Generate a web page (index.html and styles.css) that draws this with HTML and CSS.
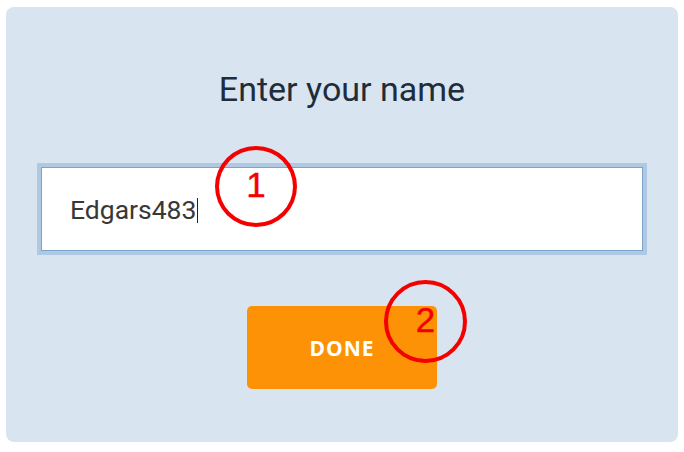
FILE: index.html
```html
<!DOCTYPE html>
<html>
<head>
<meta charset="utf-8">
<link rel="stylesheet" href="styles.css">
</head>
<body>
<div class="card">
  <h1 class="title">Enter your name</h1>
  <div class="field"><span class="value">Edgars483</span><span class="caret"></span></div>
  <button class="done">DONE</button>
  <div class="mark mark-1"><span>1</span></div>
  <div class="mark mark-2"><span>2</span></div>
</div>
</body>
</html>
```
FILE: styles.css
```css
html, body {
  margin: 0;
  padding: 0;
  background: #ffffff;
}
body {
  width: 684px;
  height: 452px;
  overflow: hidden;
}
.card {
  position: relative;
  box-sizing: border-box;
  margin: 7px 6px 0 6px;
  width: 672px;
  height: 435px;
  background: #d8e4ef;
  border-radius: 8px;
  padding: 62px 35px 0 35px;
  display: flex;
  flex-direction: column;
  align-items: center;
}
.title {
  margin: 0;
  font-family: Roboto, "Liberation Sans", sans-serif;
  font-weight: 400;
  font-size: 34px;
  line-height: 40px;
  color: #1e2c3b;
}
.field {
  margin-top: 58px;
  box-sizing: border-box;
  width: 602px;
  height: 84px;
  background: #fff;
  border: 1px solid #7ca3cb;
  box-shadow: 0 0 0 4px #afc9e3;
  display: flex;
  align-items: center;
  padding-left: 28px;
  font-family: Roboto, "Liberation Sans", sans-serif;
  font-size: 26.5px;
  color: #383838;
}
.caret {
  display: inline-block;
  width: 1px;
  height: 25px;
  background: #222;
  margin-left: 1px;
  margin-top: 2px;
}
.done {
  margin-top: 55px;
  width: 190px;
  height: 83px;
  border: none;
  border-radius: 5px;
  background: #fd9207;
  color: #fff;
  font-family: "Open Sans", "Liberation Sans", sans-serif;
  font-weight: 700;
  font-size: 21px;
  letter-spacing: 1px;
  padding: 0;
}
.mark {
  position: absolute;
  box-sizing: border-box;
  border: 4px solid #f40000;
  border-radius: 50%;
  display: flex;
  align-items: center;
  justify-content: center;
  font-family: "Liberation Sans", Arial, sans-serif;
  font-size: 35px;
  line-height: 1;
  color: #f40000;
  -webkit-text-stroke: 0.4px #f40000;
}
.mark span {
  position: relative;
  top: -2px;
}
.mark-1 {
  left: 209px;
  top: 139px;
  width: 82px;
  height: 81px;
}
.mark-2 {
  left: 378px;
  top: 273px;
  width: 83px;
  height: 83px;
}
```
